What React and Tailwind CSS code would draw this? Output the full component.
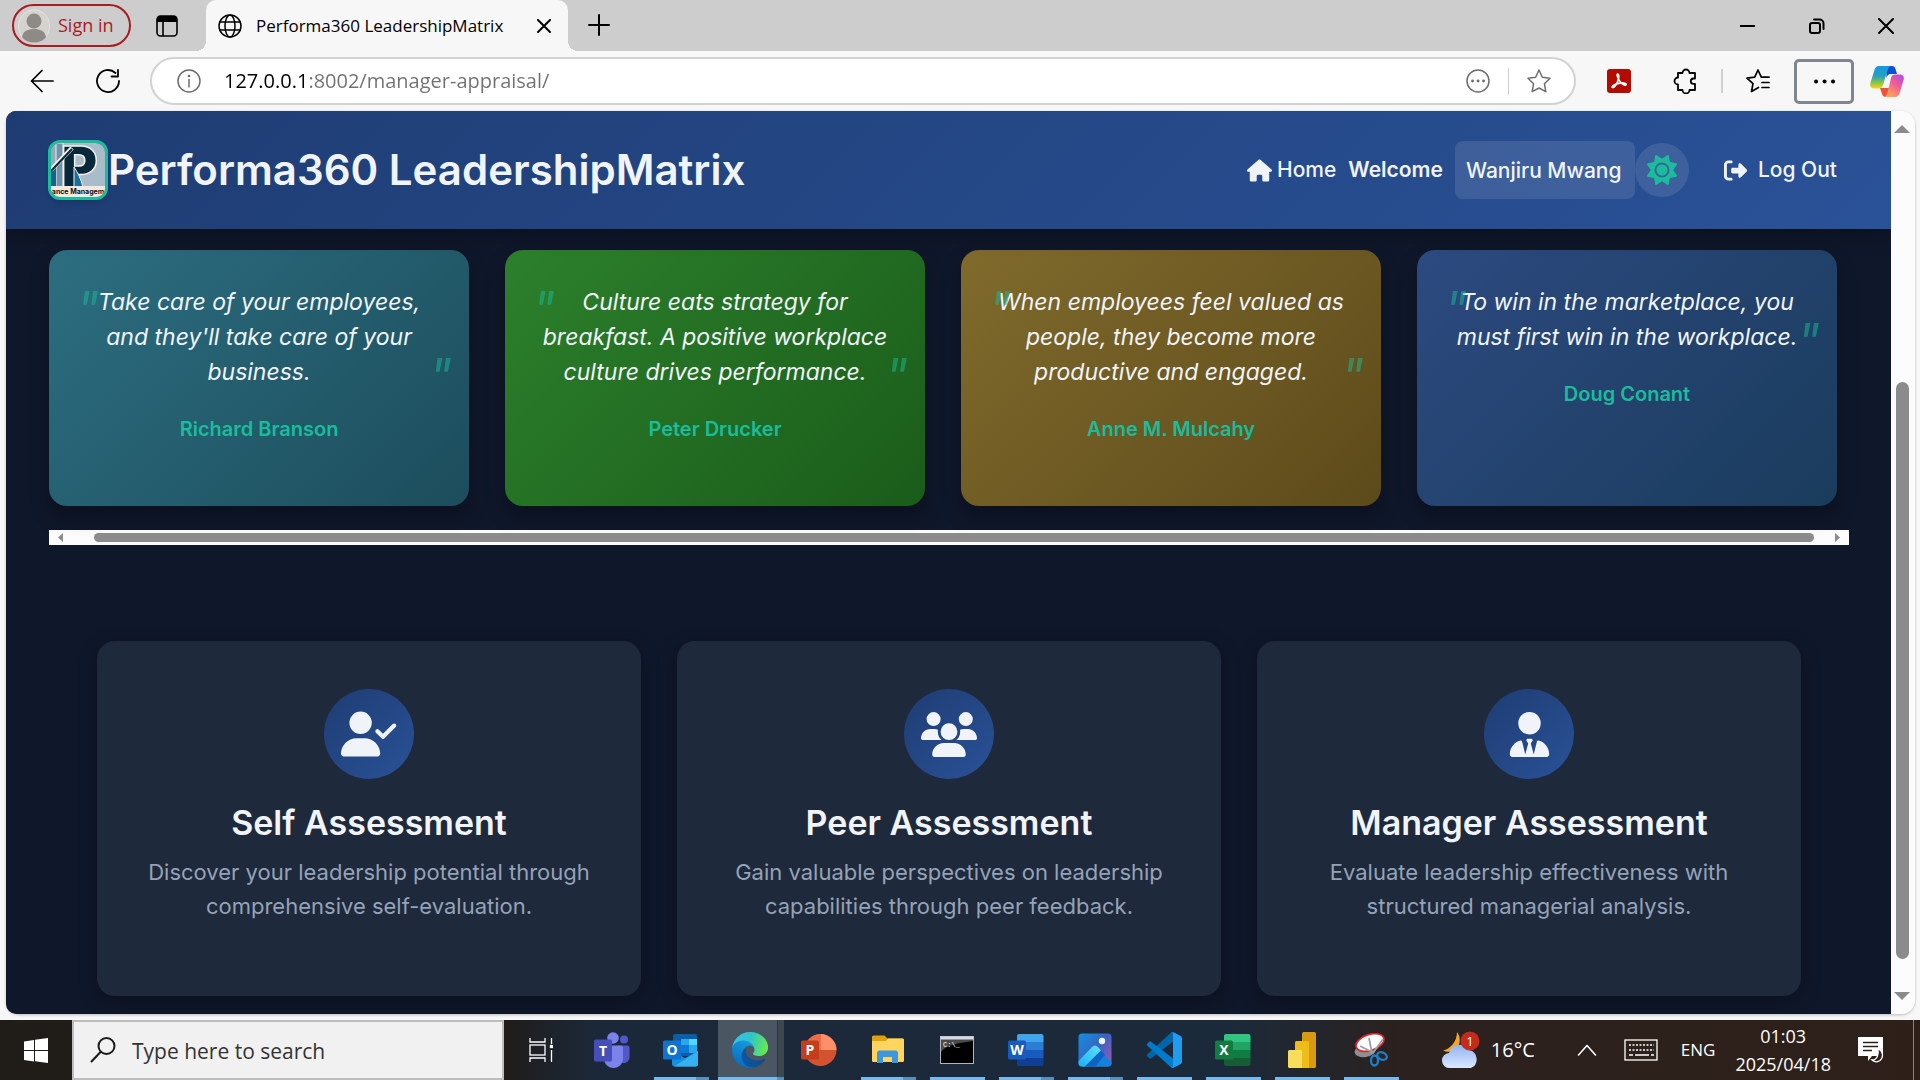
import React from "react";
import { FaHouse, FaUserCheck, FaUserTie, FaRightFromBracket, FaSun } from "react-icons/fa6";

const UI_FONT = "font-['Open_Sans','Noto_Sans',sans-serif]";

/* ---------- Browser icons ---------- */

function Line({ size = 24, w = 2, children, ...rest }) {
  return (
    <svg width={size} height={size} viewBox={`0 0 ${size} ${size}`} fill="none" stroke="currentColor" strokeWidth={w} strokeLinecap="round" strokeLinejoin="round" aria-hidden="true" {...rest}>
      {children}
    </svg>
  );
}

function AvatarIcon() {
  return (
    <svg width="32" height="34" viewBox="0 0 32 34" aria-hidden="true">
      <ellipse cx="16" cy="17" rx="15.5" ry="16.5" fill="#d6d3cf" stroke="#e4e2df" />
      <circle cx="16" cy="12" r="7.5" fill="#8e8a86" />
      <path d="M4 28c1-6 6-8 12-8s11 2 12 8c-3 4-7 5.500-12 5.500S7 32 4 28z" fill="#8e8a86" />
    </svg>
  );
}

function TabActionsIcon() {
  return (
    <svg width="22" height="22" viewBox="0 0 22 22" aria-hidden="true">
      <rect x="1" y="1" width="20" height="20" rx="3.500" fill="none" stroke="#000" strokeWidth="1.600" />
      <path d="M1 7V4a3 3 0 0 1 3-3h14a3 3 0 0 1 3 3v3z" fill="#000" />
      <path d="M7 7v14" stroke="#000" strokeWidth="1.600" />
    </svg>
  );
}

function GlobeIcon() {
  return (
    <Line size={24} w={1.5} className="shrink-0">
      <circle cx="12" cy="12" r="11" />
      <ellipse cx="12" cy="12" rx="5" ry="11" />
      <path d="M2 8h20M2 16h20" />
    </Line>
  );
}

function CopilotIcon() {
  return (
    <svg width="34" height="31" viewBox="0 0 34 31" aria-hidden="true">
      <defs>
        <linearGradient id="cpA" x1="0" y1="0" x2="0" y2="1">
          <stop offset="0" stopColor="#0a9be8" />
          <stop offset="0.450" stopColor="#2a9fc0" />
          <stop offset="0.750" stopColor="#8cc63f" />
          <stop offset="1" stopColor="#ffd21f" />
        </linearGradient>
        <linearGradient id="cpB" x1="1" y1="0" x2="0.300" y2="1">
          <stop offset="0" stopColor="#a44cf0" />
          <stop offset="0.450" stopColor="#ee5a9a" />
          <stop offset="1" stopColor="#ffa757" />
        </linearGradient>
      </defs>
      <path d="M16 0h6c2 0 3 1 3.500 3l1.500 5h-6c-3 0-4 2-4.500 4z" fill="#0f4fd0" />
      <path d="M10 22l2 6c.6 2 2 3 4 3h3l3-9z" fill="#f0533c" />
      <path d="M9 0h12c-2 .5-2.800 2-3.500 4.500L13 19c-.7 2.500-2 3.500-4.500 3.500H4C1 22.500-.5 20 .4 17L4.500 4C5.300 1.500 6.500 0 9 0z" fill="url(#cpA)" />
      <path d="M25.500 8.500H30c3 0 4.500 2.500 3.600 5.500l-4 13c-.8 2.500-2 4-4.600 4H14c2-.5 2.800-2 3.500-4.500L21 12c.7-2.500 2-3.500 4.500-3.500z" fill="url(#cpB)" />
    </svg>
  );
}

/* ---------- Taskbar icons ---------- */

function TeamsIcon() {
  return (
    <svg width="36" height="40" viewBox="0 0 36 40" aria-hidden="true">
      <circle cx="30" cy="9.500" r="4" fill="#5059c9" />
      <path d="M24 15.500h9.500c1 0 2 1 2 2v9c0 4-2.500 6.500-5.500 6.500s-6-2-6-6z" fill="#5059c9" />
      <circle cx="19" cy="8" r="5.800" fill="#7b83eb" />
      <path d="M11 15.500h16c1 0 2 1 2 2v11c0 5-4 9.500-9.500 9.500S10 33.500 10 28.500z" fill="#7b83eb" />
      <rect x="0" y="9.500" width="18" height="22" rx="1.500" fill="#464eb8" />
      <text x="9" y="25.500" textAnchor="middle" fontSize="14" fontWeight="700" fill="#fff" fontFamily="Open Sans, sans-serif">T</text>
    </svg>
  );
}

function OutlookIcon() {
  return (
    <svg width="36" height="34" viewBox="0 0 36 34" aria-hidden="true">
      <rect x="10" y="1" width="24" height="22" rx="2" fill="#0a5ea8" />
      <rect x="18" y="6" width="8" height="6" fill="#28a8ea" />
      <rect x="26" y="6" width="8" height="6" fill="#50d9ff" />
      <rect x="10" y="12" width="8" height="8" fill="#0b53a0" />
      <rect x="18" y="12" width="8" height="8" fill="#0f78d4" />
      <rect x="26" y="12" width="8" height="8" fill="#28a8ea" />
      <path d="M9 18l13 7 13-7v13c0 1.500-1 2.500-2.500 2.500h-21C10 33.500 9 32.500 9 31z" fill="#1490df" />
      <path d="M35 18L11 33.500h21.500c1.500 0 2.500-1 2.500-2.500z" fill="#35b0f0" />
      <rect x="0" y="7.500" width="18" height="19" rx="1.500" fill="#0f74d0" />
      <text x="9" y="22" textAnchor="middle" fontSize="14" fontWeight="700" fill="#fff" fontFamily="Open Sans, sans-serif">O</text>
    </svg>
  );
}

function EdgeIcon() {
  return (
    <svg width="36" height="36" viewBox="0 0 256 256" aria-hidden="true">
      <defs>
        <linearGradient id="edA" x1="0" y1="0" x2="1" y2="0">
          <stop offset="0" stopColor="#0c59a4" />
          <stop offset="1" stopColor="#114a8b" />
        </linearGradient>
        <linearGradient id="edB" x1="0.700" y1="0" x2="0.200" y2="1">
          <stop offset="0" stopColor="#1b9de2" />
          <stop offset="1" stopColor="#0668bf" />
        </linearGradient>
        <linearGradient id="edC" x1="0" y1="0.300" x2="1" y2="0.500">
          <stop offset="0" stopColor="#35c1f1" />
          <stop offset="0.500" stopColor="#2fc6c4" />
          <stop offset="1" stopColor="#6ae84e" />
        </linearGradient>
      </defs>
      <path d="M231 190.500c-3.400 1.800-6.900 3.400-10.500 4.700a101 101 0 0 1-35.900 6.500c-47.300 0-88.500-32.500-88.500-74.300.1-11.400 6.400-21.900 16.400-27.300-42.800 1.800-53.800 46.400-53.800 72.500 0 73.900 68.100 81.400 82.800 81.400 7.900 0 19.800-2.300 27-4.600l1.300-.4a128 128 0 0 0 66.600-52.800 4 4 0 0 0-5.400-5.700z" fill="url(#edA)" />
      <path d="M105.700 241.400a79 79 0 0 1-22.700-21.300 80.700 80.700 0 0 1 29.500-120c3.100-1.500 8.500-4.100 15.600-4 10.100.1 19.600 4.900 25.700 13 4 5.400 6.300 11.900 6.400 18.700 0-.2 24.500-79.600-80-79.600-43.900 0-80 41.700-80 78.200a130 130 0 0 0 12.100 56 128 128 0 0 0 156.400 67 75.600 75.600 0 0 1-62.800-8z" fill="url(#edB)" />
      <path d="M152.300 148.900c-.9 1-3.400 2.500-3.400 5.600 0 2.600 1.700 5.200 4.800 7.300 14.500 10.100 41.900 8.800 42 8.800 10.700 0 21.300-2.900 30.500-8.400A61.800 61.800 0 0 0 256.600 109c.3-22.400-8-37.300-11.300-43.900C223.900 23.400 177.700 0 128 0A128 128 0 0 0 0 126.200c.5-36.500 36.800-66 80-66 3.500 0 23.500.3 42 10.100 16.300 8.600 24.900 18.900 30.800 29.200 6.200 10.700 7.300 24.100 7.300 29.500s-2.700 13.300-7.800 19.900z" fill="url(#edC)" />
    </svg>
  );
}

function PowerPointIcon() {
  return (
    <svg width="36" height="34" viewBox="0 0 36 34" aria-hidden="true">
      <circle cx="19.500" cy="17" r="16" fill="#d35230" />
      <path d="M19.500 1a16 16 0 0 1 16 16h-16z" fill="#ff8f6b" />
      <path d="M19.500 1a16 16 0 0 0-16 16h16z" fill="#ed6c47" />
      <rect x="0" y="7.500" width="18" height="19" rx="1.500" fill="#c43e1c" />
      <text x="9" y="22" textAnchor="middle" fontSize="14" fontWeight="700" fill="#fff" fontFamily="Open Sans, sans-serif">P</text>
    </svg>
  );
}

function ExplorerIcon() {
  return (
    <svg width="34" height="30" viewBox="0 0 34 30" aria-hidden="true">
      <path d="M1 2a1.500 1.500 0 0 1 1.500-1.500h11l3 3H31A1.500 1.500 0 0 1 32.500 5v20H1z" fill="#e0a10a" />
      <path d="M1 6h14l2-2.500h15A1.500 1.500 0 0 1 33 5v20.500A1.500 1.500 0 0 1 31.500 27h-29A1.500 1.500 0 0 1 1 25.500z" fill="#ffd560" />
      <path d="M6 28V18a2.500 2.500 0 0 1 2.500-2.500h16A2.500 2.500 0 0 1 27 18v10h-6v-6h-9v6z" fill="#3c97dc" />
    </svg>
  );
}

function TerminalIcon() {
  return (
    <svg width="34" height="28" viewBox="0 0 34 28" aria-hidden="true">
      <rect x="0.500" y="0.500" width="33" height="27" fill="#000" stroke="#aeb6bf" />
      <path d="M1 3h32v2L20 7C10 9 5 11 1 16z" fill="#4a4a4a" />
      <rect x="0.500" y="0.500" width="33" height="3" fill="#d5dbe3" />
      <text x="3" y="11" fontSize="7" fill="#fff" fontFamily="Liberation Mono, monospace">C:\_</text>
    </svg>
  );
}

function OfficeSheetIcon({ letter, bands, badge }) {
  return (
    <svg width="36" height="34" viewBox="0 0 36 34" aria-hidden="true">
      <path d="M9 9V3a2 2 0 0 1 2-2h22.500a2 2 0 0 1 2 2v6z" fill={bands[0]} />
      <rect x="9" y="9" width="26.500" height="8" fill={bands[1]} />
      <rect x="9" y="17" width="26.500" height="8" fill={bands[2]} />
      <path d="M9 25h26.500v6a2 2 0 0 1-2 2H11a2 2 0 0 1-2-2z" fill={bands[3]} />
      <rect x="0" y="7.500" width="18" height="19" rx="1.500" fill={badge} />
      <text x="9" y="22" textAnchor="middle" fontSize="14" fontWeight="700" fill="#fff" fontFamily="Open Sans, sans-serif">{letter}</text>
    </svg>
  );
}

function PhotosIcon() {
  return (
    <svg width="34" height="34" viewBox="0 0 34 34" aria-hidden="true">
      <defs>
        <linearGradient id="phA" x1="0" y1="0" x2="1" y2="0.700">
          <stop offset="0" stopColor="#0f8fe0" />
          <stop offset="0.600" stopColor="#3c62c0" />
          <stop offset="1" stopColor="#8a5ab8" />
        </linearGradient>
        <linearGradient id="phB" x1="0" y1="1" x2="1" y2="0">
          <stop offset="0" stopColor="#1ab0f0" />
          <stop offset="1" stopColor="#5fe3ff" />
        </linearGradient>
      </defs>
      <rect x="0.500" y="0.500" width="33" height="33" rx="3.500" fill="url(#phA)" />
      <path d="M4 33.500L14 17c1.500-2 4-2 5.500 0L33.500 29v1a3.500 3.500 0 0 1-3.500 3.500z" fill="#1283dc" />
      <path d="M.5 28L14 14c2-2 4-2 6 0l3 3.500L7 33.500H4A3.500 3.500 0 0 1 .5 30z" fill="url(#phB)" />
      <path d="M23 17.500L7 33.500h10L27 22z" fill="#0c63c4" />
      <circle cx="24" cy="8" r="3.200" fill="#f0f4fa" />
    </svg>
  );
}

function VsCodeIcon() {
  return (
    <svg width="36" height="36" viewBox="0 0 100 100" aria-hidden="true">
      <path d="M96 11L76 1a6 6 0 0 0-7 1L4 62a4 4 0 0 0 0 6l5 5a4 4 0 0 0 5 0L93 13c3-2 7 0 7 3v-.5a6 6 0 0 0-4-4.500z" fill="#0065a9" />
      <path d="M96 89L76 99a6 6 0 0 1-7-1L4 38a4 4 0 0 1 0-6l5-5a4 4 0 0 1 5 0l79 60c3 2 7 0 7-3v.5a6 6 0 0 1-4 4.500z" fill="#007acc" />
      <path d="M76 99a6 6 0 0 1-7-1c2 2 6 1 6-2V4c0-3-4-5-6-2a6 6 0 0 1 7-1l20 10a6 6 0 0 1 4 5v67a6 6 0 0 1-4 6z" fill="#1f9cf0" />
    </svg>
  );
}

function PowerBiIcon() {
  return (
    <svg width="28" height="36" viewBox="0 0 28 36" aria-hidden="true">
      <rect x="14" y="0" width="14" height="36" rx="1.500" fill="#d99a0f" />
      <path d="M7 10.500A1.500 1.500 0 0 1 8.500 9h11a1.500 1.500 0 0 1 1.500 1.500V36H7z" fill="#eebd1c" />
      <path d="M0 19.500A1.500 1.500 0 0 1 1.500 18h11a1.500 1.500 0 0 1 1.500 1.500V36H1.500A1.500 1.500 0 0 1 0 34.500z" fill="#f8dc5c" />
    </svg>
  );
}

function SnipIcon() {
  return (
    <svg width="34" height="34" viewBox="0 0 34 34" aria-hidden="true">
      <ellipse cx="11" cy="18" rx="10.500" ry="6" fill="#8d9093" transform="rotate(-8 11 18)" />
      <ellipse cx="16" cy="9.500" rx="14.500" ry="8" fill="#fff" stroke="#d8262c" strokeWidth="1.800" transform="rotate(-18 16 9.500)" />
      <path d="M15 5l3 15M6 13l14 7M29 6L19 20" stroke="#9aa0a6" strokeWidth="1.800" fill="none" />
      <ellipse cx="28" cy="23" rx="5" ry="3.500" fill="none" stroke="#1b7fc9" strokeWidth="2.300" transform="rotate(25 28 23)" />
      <ellipse cx="20.500" cy="27.500" rx="3.500" ry="5" fill="none" stroke="#1b7fc9" strokeWidth="2.300" />
    </svg>
  );
}

function TaskViewIcon() {
  return (
    <svg width="24" height="24" viewBox="0 0 24 24" fill="none" stroke="#fff" strokeWidth="1.300" aria-hidden="true">
      <path d="M1 0v4h15V0M1 24v-4h15v4" />
      <rect x="1" y="7" width="15" height="10" />
      <path d="M22.500 0v6M22.500 12v12" />
      <rect x="21.500" y="7.500" width="2" height="2" fill="#fff" />
    </svg>
  );
}

function WeatherIcon() {
  return (
    <svg width="38" height="38" viewBox="0 0 38 38" aria-hidden="true">
      <defs>
        <linearGradient id="wxA" x1="0" y1="0" x2="0" y2="1">
          <stop offset="0" stopColor="#8fb4f2" />
          <stop offset="1" stopColor="#dbe8fd" />
        </linearGradient>
      </defs>
      <path d="M15 1c5 6 3 16-4 19-3 1.300-7 1-10-.5C8 18 15 11 15 1z" fill="#f5a623" />
      <path d="M8 37a7.500 7.500 0 0 1-1-15 11 11 0 0 1 20-3 9.500 9.500 0 0 1 2 18z" fill="url(#wxA)" />
      <circle cx="28" cy="10" r="9.500" fill="#c42b1c" />
      <text x="28" y="15" textAnchor="middle" fontSize="13" fill="#fff" fontFamily="Open Sans, sans-serif">1</text>
    </svg>
  );
}

function KeyboardIcon() {
  return (
    <svg width="34" height="24" viewBox="0 0 34 24" fill="none" stroke="#fff" strokeWidth="1.300" aria-hidden="true">
      <rect x="1" y="2" width="32" height="20" />
      <path d="M5 7h25M5 12h25" strokeDasharray="2 1.500" />
      <path d="M5 17h4M11 17h14M27 17h3" />
    </svg>
  );
}

function NotificationIcon() {
  return (
    <svg width="26" height="26" viewBox="0 0 26 26" aria-hidden="true">
      <path d="M0 0h25v19H14l-4 5v-5H0z" fill="#fff" />
      <path d="M5 5.500h15M5 9.500h15M5 13.500h9" stroke="#2e2019" strokeWidth="1.500" />
      <path d="M20 12c5 2 6 8 2 11.500-2.500 2-6 1.500-8-.5 5 0 7-5 6-11z" fill="#2e2019" stroke="#fff" strokeWidth="1.300" />
    </svg>
  );
}

/* ---------- Browser chrome ---------- */

function TabStrip() {
  return (
    <div className="flex h-[51px] items-stretch bg-[#cdcdcd]">
      <div className="flex w-[206px] items-center pl-3">
        <button className="flex h-[43px] w-[119px] items-center gap-2 rounded-full border-2 border-[#a81c22] pl-1 text-[#a81c22]">
          <AvatarIcon />
          <span className="whitespace-nowrap text-[18px]">Sign in</span>
        </button>
        <button className="ml-[25px]" aria-label="Tab actions menu"><TabActionsIcon /></button>
      </div>
      <div className="relative flex w-[362px] items-center rounded-t-[10px] bg-[#f7f7f7] pl-3 pr-4 text-black">
        <span className="absolute bottom-0 -left-[10px] h-[10px] w-[10px] bg-[radial-gradient(circle_at_0_0,transparent_10px,#f7f7f7_10px)]" />
        <span className="absolute bottom-0 -right-[10px] h-[10px] w-[10px] bg-[radial-gradient(circle_at_100%_0,transparent_10px,#f7f7f7_10px)]" />
        <GlobeIcon />
        <span className="ml-[14px] flex-1 whitespace-nowrap text-[17px]">Performa360 LeadershipMatrix</span>
        <button aria-label="Close tab">
          <Line size={16} w={2}><path d="M2 2l12 12M14 2L2 14" /></Line>
        </button>
      </div>
      <button className="ml-[19px]" aria-label="New tab">
        <Line size={24} w={2}><path d="M2 11h20M12 1v20" /></Line>
      </button>
      <div className="ml-auto flex text-black">
        <button className="flex w-[69px] items-center justify-center" aria-label="Minimize">
          <Line size={16} w={2}><path d="M0 8h15" strokeLinecap="butt" /></Line>
        </button>
        <button className="flex w-[69px] items-center justify-center" aria-label="Restore">
          <Line size={16} w={2}>
            <rect x="1" y="5" width="10" height="10" rx="2" />
            <path d="M5 1.500h5.500a4 4 0 0 1 4 4V11" />
          </Line>
        </button>
        <button className="flex w-[69px] items-center justify-center" aria-label="Close">
          <Line size={16} w={2}><path d="M1 1l14 14M15 1L1 15" /></Line>
        </button>
      </div>
    </div>
  );
}

function Toolbar() {
  return (
    <div className="flex h-[60px] items-center bg-[#f7f7f7] text-black">
      <button className="ml-[30px]" aria-label="Back">
        <Line size={24} w={1.7}><path d="M23 12H1.500M12 1.500L1.500 12 12 22.500" /></Line>
      </button>
      <button className="ml-[42px]" aria-label="Refresh">
        <Line size={24} w={1.8}><path d="M23 12A11 11 0 1 1 19.500 4M22 1v6.500h-6.500" /></Line>
      </button>
      <div className="ml-[30px] flex h-[48px] min-w-0 flex-1 items-center rounded-full border-2 border-[#d2d2d2] bg-white pl-[25px] text-[#6e6e6e]">
        <Line size={24} w={1.5} className="shrink-0">
          <circle cx="12" cy="12" r="11" />
          <path d="M12 10.500v7.500" />
          <circle cx="12" cy="7" r="0.600" />
        </Line>
        <input
          aria-label="Address"
          defaultValue="127.0.0.1:8002/manager-appraisal/"
          className="ml-[23px] min-w-0 flex-1 bg-[linear-gradient(to_right,#000_84px,#717171_84px)] bg-clip-text text-[20px] text-transparent outline-none"
        />
        <button aria-label="Page options">
          <Line size={24} w={1.5}>
            <circle cx="12" cy="12" r="11" />
            <path d="M6.500 12h.1M12 12h.1M17.500 12h.1" strokeWidth="2.800" />
          </Line>
        </button>
        <span className="ml-[18px] h-[27px] w-px bg-[#cfcfcf]" />
        <button className="ml-[18px] mr-[23px]" aria-label="Add to favorites">
          <Line size={24} w={1.5}><path d="M12 1l3.300 7.200 7.700 1-5.600 5.500 1.400 8-6.800-3.700-6.800 3.700 1.400-8L1 9.200l7.700-1z" /></Line>
        </button>
      </div>
      <button className="ml-[31px] flex h-6 w-6 items-center justify-center rounded-[3px] bg-[#b30b00] text-white" aria-label="Adobe Acrobat">
        <Line size={18} w={1.7}><path d="M7.500 2c1.700 0 1.500 3.500.5 6.500C7 11.500 4.500 16 2.700 15.500c-2-.8 2-3.500 6-4.200 4-.7 7.500-.3 7.500 1 0 1.700-3 .7-5.500-1.800C8 7.500 6.500 2.500 7.500 2z" /></Line>
      </button>
      <button className="ml-[42px]" aria-label="Extensions">
        <Line size={26} w={1.8}><path d="M5 5h4.500a3.500 3.500 0 0 1 7 0H22v5.500h-1.500a2.700 2.700 0 0 0 0 5.400H22V22h-5.500a3.500 3.500 0 0 1-7 0H5v-5.500a3.500 3.500 0 0 1 0-7z" /></Line>
      </button>
      <span className="ml-[22px] h-6 w-[2px] bg-[#cfcfcf]" />
      <button className="ml-[23px]" aria-label="Favorites">
        <Line size={24} w={1.7}><path d="M12.500 18.500L5.500 22.500 7 14.700 1 9.200l7.700-1L12 1l3.300 7.200H23M16 13.500h7M16 18.500h7" /></Line>
      </button>
      <button className="ml-[24px] flex h-[45px] w-[60px] items-center justify-center rounded-[5px] border-[3px] border-[#80868f]" aria-label="Settings and more">
        <Line size={24} w={4}><path d="M4 12.500h.1M12.500 12.500h.1M21 12.500h.1" /></Line>
      </button>
      <button className="ml-[16px] mr-[16px]" aria-label="Copilot"><CopilotIcon /></button>
    </div>
  );
}

/* ---------- Page ---------- */

function BrandLogo() {
  return (
    <div className="h-[60px] w-[60px] overflow-hidden rounded-xl border-[3px] border-[#1abc9c] shadow-md">
      <svg width="54" height="54" viewBox="0 0 54 54" aria-label="Performa360 logo">
        <rect width="54" height="54" fill="#a9bcc9" />
        <rect x="0" y="0" width="5" height="44" fill="#8fabbd" />
        <rect x="5" y="0" width="7" height="44" fill="#6f93aa" stroke="#f6efe6" strokeWidth="1" />
        <path d="M0 44V28l5-4v20z" fill="#14648a" />
        <text x="10" y="44" fontSize="56" fontWeight="900" fontFamily="Inter, sans-serif" fill="#06283a" stroke="#f6efe6" strokeWidth="1.500">P</text>
        <path d="M23 24c4 6 7 12 9 20h-9z" fill="#1b6f9c" stroke="#f6efe6" strokeWidth="1" />
        <path d="M0 27L21 5" stroke="#f6efe6" strokeWidth="4.500" />
        <path d="M0 28L21 6" stroke="#06283a" strokeWidth="2.200" />
        <rect x="0" y="43" width="54" height="11" fill="#f3e9e2" />
        <text x="27" y="51" textAnchor="middle" fontSize="7" fontWeight="700" fontFamily="Inter, sans-serif" fill="#111">ance Managem</text>
      </svg>
    </div>
  );
}

function SiteHeader() {
  return (
    <header className="relative flex h-[118px] shrink-0 items-center bg-[linear-gradient(135deg,#1e3c72,#2a5298)] pl-[42px] pr-[54px] text-[#f0f4f8] shadow-[0_5px_19px_rgba(0,0,0,0.3)]">
      <BrandLogo />
      <h1 className="whitespace-nowrap text-[42px] font-semibold leading-none">Performa360 LeadershipMatrix</h1>
      <nav className="ml-auto flex items-center text-[21px] font-medium">
        <a href="#home" className="flex items-center gap-[5px]">
          <FaHouse size={25} />
          Home
        </a>
        <span className="ml-3 font-semibold">Welcome</span>
        <input
          aria-label="User name"
          defaultValue="Wanjiru Mwang"
          className="ml-3 h-[58px] w-[180px] rounded-lg bg-white/10 pl-[11px] outline-none"
        />
        <button className="flex h-[54px] w-[54px] items-center justify-center rounded-full bg-white/10 text-[#1abc9c]" aria-label="Toggle theme">
          <FaSun size={30} />
        </button>
        <a href="#logout" className="ml-[35px] flex items-center gap-[11px]">
          <FaRightFromBracket size={23} />
          Log Out
        </a>
      </nav>
    </header>
  );
}

const QUOTES = [
  { text: "Take care of your employees, and they'll take care of your business.", author: "Richard Branson", bg: "bg-[linear-gradient(135deg,#2c6e80,#1c4d5c)]" },
  { text: "Culture eats strategy for breakfast. A positive workplace culture drives performance.", author: "Peter Drucker", bg: "bg-[linear-gradient(135deg,#2c802c,#1a5c1a)]" },
  { text: "When employees feel valued as people, they become more productive and engaged.", author: "Anne M. Mulcahy", bg: "bg-[linear-gradient(135deg,#806b2c,#5c4a1a)]" },
  { text: "To win in the marketplace, you must first win in the workplace.", author: "Doug Conant", bg: "bg-[linear-gradient(135deg,#2c4a80,#1a3c5c)]" },
];

function QuoteCard({ text, author, bg }) {
  return (
    <article className={`h-[256px] rounded-[18px] px-[31px] pt-[35px] text-center shadow-[0_10px_20px_rgba(0,0,0,0.3)] ${bg}`}>
      <blockquote className="relative text-[23px] italic leading-[35px] text-[#f0f4f8]">
        <span className="absolute -left-1 top-0 text-[50px] leading-[50px] text-[#1abc9c] opacity-50">"</span>
        {text}
        <span className="absolute -bottom-3 -right-[14px] text-[50px] leading-[50px] text-[#1abc9c] opacity-50">"</span>
      </blockquote>
      <p className="mt-[22px] text-[20px] font-semibold leading-[35px] text-[#1abc9c]">{author}</p>
    </article>
  );
}

function Quotes() {
  return (
    <section className="pl-[43px] pr-[42px] pt-[21px]">
      <div className="grid grid-cols-4 gap-9 pr-3">
        {QUOTES.map((q) => <QuoteCard key={q.author} {...q} />)}
      </div>
      <div className="mt-6 flex h-[15px] items-center bg-[#fcfcfc] px-[9px]">
        <svg width="5" height="9" viewBox="0 0 5 9" aria-hidden="true"><path d="M5 0v9L0 4.500z" fill="#8b8b8b" /></svg>
        <div className="ml-[31px] mr-[21px] h-[9px] flex-1 rounded-full bg-[#8b8b8b]" />
        <svg width="5" height="9" viewBox="0 0 5 9" aria-hidden="true"><path d="M0 0v9l5-4.500z" fill="#8b8b8b" /></svg>
      </div>
    </section>
  );
}

function PeopleIcon() {
  return (
    <svg width="56" height="45" viewBox="0 0 640 512" fill="currentColor" aria-hidden="true">
      <path d="M144 0a80 80 0 1 1 0 160A80 80 0 1 1 144 0zM512 0a80 80 0 1 1 0 160A80 80 0 1 1 512 0zM0 298.700C0 239.800 47.800 192 106.700 192h42.700c15.900 0 31 3.500 44.600 9.700-1.300 7.200-1.900 14.700-1.900 22.300 0 38.200 16.800 72.500 43.300 96H21.300C9.600 320 0 310.400 0 298.700zM405.300 320h-.7c26.600-23.500 43.300-57.800 43.300-96 0-7.600-.7-15-1.900-22.300 13.600-6.300 28.700-9.700 44.600-9.700h42.700C592.200 192 640 239.800 640 298.700c0 11.800-9.600 21.300-21.300 21.300H405.300zM224 224a96 96 0 1 1 192 0 96 96 0 1 1-192 0zM128 485.300C128 411.700 187.700 352 261.300 352h117.300C452.300 352 512 411.700 512 485.300c0 14.700-11.900 26.700-26.700 26.700H154.600C139.900 512 128 500 128 485.300z" />
    </svg>
  );
}

const ASSESSMENTS = [
  { title: "Self Assessment", lines: ["Discover your leadership potential through", "comprehensive self-evaluation."], icon: <FaUserCheck size={56} /> },
  { title: "Peer Assessment", lines: ["Gain valuable perspectives on leadership", "capabilities through peer feedback."], icon: <PeopleIcon /> },
  { title: "Manager Assessment", lines: ["Evaluate leadership effectiveness with", "structured managerial analysis."], icon: <FaUserTie size={45} /> },
];

function AssessmentCard({ title, lines, icon }) {
  return (
    <article className="flex h-[355px] flex-col items-center rounded-[18px] bg-[#1e293b] pt-12 text-center shadow-[0_5px_19px_rgba(0,0,0,0.3)]">
      <div className="flex h-[90px] w-[90px] items-center justify-center rounded-full bg-[linear-gradient(135deg,#1e3c72,#2a5298)] text-[#f0f4f8]">
        {icon}
      </div>
      <h2 className="mt-5 text-[34px] font-semibold leading-[48px] text-[#f0f4f8]">{title}</h2>
      <p className="mt-2 text-[22px] leading-[34px] text-[#94a3b8]">{lines[0]}<br />{lines[1]}</p>
    </article>
  );
}

function PageScrollbar() {
  return (
    <div className="flex w-6 shrink-0 flex-col items-center rounded-r-[14px] bg-[#fcfcfc] py-[14px] pr-[2px]">
      <svg width="16" height="8" viewBox="0 0 16 8" aria-hidden="true"><path d="M8 0l8 8H0z" fill="#8b8b8b" /></svg>
      <div className="flex w-full flex-1 flex-col items-center pb-[33px] pt-[249px]">
        <div className="w-[13px] flex-1 rounded-full bg-[#8b8b8b]" />
      </div>
      <svg width="16" height="8" viewBox="0 0 16 8" aria-hidden="true"><path d="M8 8L0 0h16z" fill="#8b8b8b" /></svg>
    </div>
  );
}

/* ---------- Taskbar ---------- */

const WORD = { letter: "W", bands: ["#41a5ee", "#2b7cd3", "#185abd", "#103f91"], badge: "#185abd" };
const EXCEL = { letter: "X", bands: ["#33c481", "#21a366", "#107c41", "#185c37"], badge: "#107c41" };

const APPS = [
  { name: "Teams", icon: <TeamsIcon />, bar: "none" },
  { name: "Outlook", icon: <OutlookIcon />, bar: "stack" },
  { name: "Edge", icon: <EdgeIcon />, bar: "active" },
  { name: "PowerPoint", icon: <PowerPointIcon />, bar: "none" },
  { name: "File Explorer", icon: <ExplorerIcon />, bar: "stack" },
  { name: "Command Prompt", icon: <TerminalIcon />, bar: "one" },
  { name: "Word", icon: <OfficeSheetIcon {...WORD} />, bar: "stack" },
  { name: "Photos", icon: <PhotosIcon />, bar: "stack" },
  { name: "Visual Studio Code", icon: <VsCodeIcon />, bar: "one" },
  { name: "Excel", icon: <OfficeSheetIcon {...EXCEL} />, bar: "one" },
  { name: "Power BI", icon: <PowerBiIcon />, bar: "one" },
  { name: "Snipping Tool", icon: <SnipIcon />, bar: "one" },
];

function AppButton({ name, icon, bar }) {
  const active = bar === "active";
  return (
    <button aria-label={name} className="relative flex w-[69px] items-center justify-center">
      {active && (
        <span className="absolute inset-y-0 left-[3px] right-0 flex">
          <span className="flex-1 bg-[#4b5663]" />
          <span className="w-[7px] border-l border-[#2a343f] bg-[#3d474f]" />
        </span>
      )}
      <span className="relative">{icon}</span>
      {bar !== "none" && (
        <span className={`absolute bottom-0 flex h-[3px] ${active ? "left-[3px] right-0" : "left-[8px] right-[6px]"}`}>
          <span className="flex-1 bg-[#76b9ed]" />
          {active && <span className="w-[7px] bg-[#5a8fb8]" />}
          {bar === "stack" && <span className="w-[13px] bg-[#5a8fb8]" />}
        </span>
      )}
    </button>
  );
}

function Taskbar() {
  return (
    <footer className="flex h-[60px] shrink-0 items-stretch bg-[linear-gradient(to_right,#201c18_0,#201c18_26%,#1b283a_31%,#1b2a3a_64%,#2b211e_73%,#2e2019_100%)] text-white">
      <button className="flex w-[72px] items-center justify-center" aria-label="Start">
        <svg width="24" height="25" viewBox="0 0 24 25" fill="#fff" aria-hidden="true"><path d="M0 3.500L10 2v10H0zM11 1.800L24 0v12H11zM0 13h10v10.500L0 22zM11 13h13v12l-13-1.800z" /></svg>
      </button>
      <label className="flex w-[432px] items-center border-2 border-[#bdbdbd] bg-[#f1f1f1] pl-4 text-[#1a1a1a]">
        <Line size={26} w={2}><circle cx="16.500" cy="9" r="8" /><path d="M10.500 15L1.500 24.500" /></Line>
        <input type="text" placeholder="Type here to search" aria-label="Type here to search" className="ml-4 min-w-0 flex-1 bg-transparent pt-[3px] text-[21px] outline-none placeholder:text-[#333333]" />
      </label>
      <button className="flex w-[73px] items-center justify-center" aria-label="Task view"><TaskViewIcon /></button>
      {APPS.map((a) => <AppButton key={a.name} {...a} />)}
      <div className="ml-auto flex items-center pr-[6px]">
        <button className="flex items-center gap-[11px] text-[20px]"><WeatherIcon />16°C</button>
        <button className="ml-[42px]" aria-label="Show hidden icons">
          <Line size={20} w={1.6}><path d="M1.500 15L10 5.500 18.500 15" /></Line>
        </button>
        <button className="ml-[27px]" aria-label="Touch keyboard"><KeyboardIcon /></button>
        <button className="ml-[23px] text-[17px]">ENG</button>
        <button className="ml-[20px] flex flex-col items-center text-[18px] leading-[28px]">
          <span>01:03</span>
          <span>2025/04/18</span>
        </button>
        <button className="ml-[27px]" aria-label="Notifications"><NotificationIcon /></button>
        <span className="ml-[29px] h-[60px] w-px bg-[#8a8480]" />
      </div>
    </footer>
  );
}

export default function App() {
  return (
    <div className={`flex h-screen flex-col overflow-hidden bg-[#f7f7f7] ${UI_FONT}`}>
      <TabStrip />
      <Toolbar />
      <div className="mb-[6px] ml-[6px] mr-[5px] flex min-h-0 flex-1 rounded-[14px] shadow-[0_1px_3px_rgba(0,0,0,0.25)]">
        <main className="flex min-w-0 flex-1 flex-col overflow-hidden rounded-l-[10px] bg-[#0f172a] font-['Inter',sans-serif]">
          <SiteHeader />
          <Quotes />
          <section className="mt-24 grid grid-cols-3 gap-9 pl-[91px] pr-[90px]">
            {ASSESSMENTS.map((a) => <AssessmentCard key={a.title} {...a} />)}
          </section>
        </main>
        <PageScrollbar />
      </div>
      <Taskbar />
    </div>
  );
}
